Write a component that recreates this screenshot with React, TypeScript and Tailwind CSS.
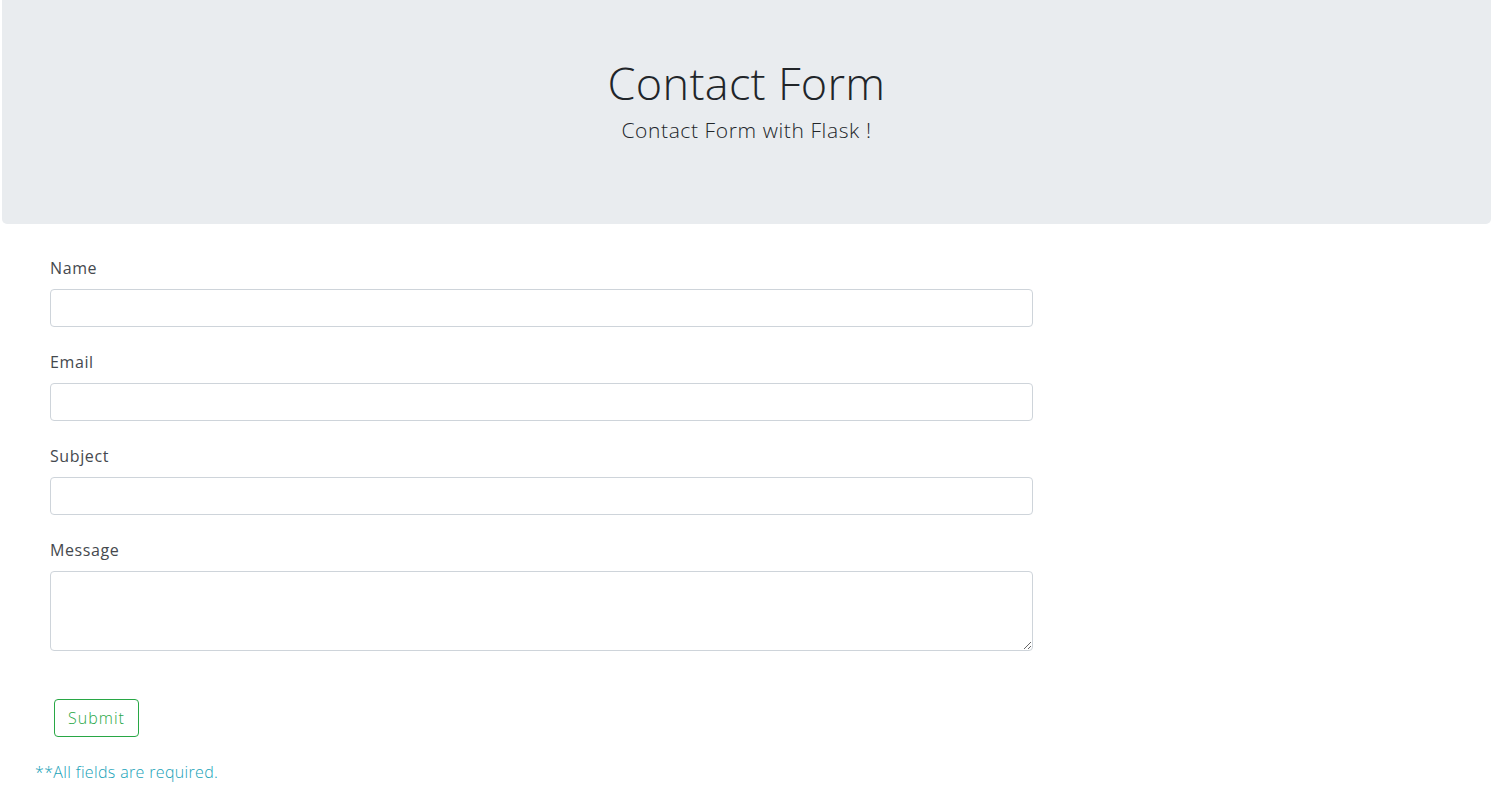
import React from "react";

const fields = [
  { label: "Name", type: "text" },
  { label: "Email", type: "email" },
  { label: "Subject", type: "text" },
];

const App = () => {
  return (
    <div className="min-h-screen bg-white font-['Open_Sans',sans-serif] font-light text-[#212529]">
      {/* jumbotron */}
      <div className="mx-[2px] w-[1489px] h-[224px] rounded-b-[5px] bg-[#e9ecef] flex flex-col items-center pt-[55px]">
        <h1 className="text-[45px] leading-[56px] font-light text-[#212529] tracking-[0.3px]">
          Contact Form
        </h1>
        <p className="mt-[4px] text-[21px] leading-[30px] font-light text-[#212529] tracking-[0.6px]">
          Contact Form with Flask !
        </p>
      </div>

      <form className="pl-[50px] pt-[32px] w-[1033px]">
        {fields.map((field) => (
          <div key={field.label} className="mb-[23px]">
            <label className="block text-[16px] leading-[24px] mb-[9px] text-[#45494e] font-normal tracking-[0.6px]">
              {field.label}
            </label>
            <input
              type={field.type}
              className="block w-full h-[38px] rounded-[4px] border border-[#ced4da] bg-white px-3 outline-none"
            />
          </div>
        ))}

        <div>
          <label className="block text-[16px] leading-[24px] mb-[9px] text-[#45494e] font-normal tracking-[0.6px]">
            Message
          </label>
          <textarea className="block w-full h-[80px] rounded-[4px] border border-[#ced4da] bg-white px-3 py-1.5 outline-none" />
        </div>

        <button
          type="submit"
          className="mt-[48px] ml-[4px] w-[85px] h-[38px] rounded-[4px] border border-[#28a745] text-[#28a745] text-[16px] font-light tracking-[1px]"
        >
          Submit
        </button>
      </form>

      <p className="mt-[23px] pl-[35px] text-[16px] leading-[24px] text-[#17a2b8] font-light tracking-[0.35px]">
        **All fields are required.
      </p>
    </div>
  );
};

export default App;
